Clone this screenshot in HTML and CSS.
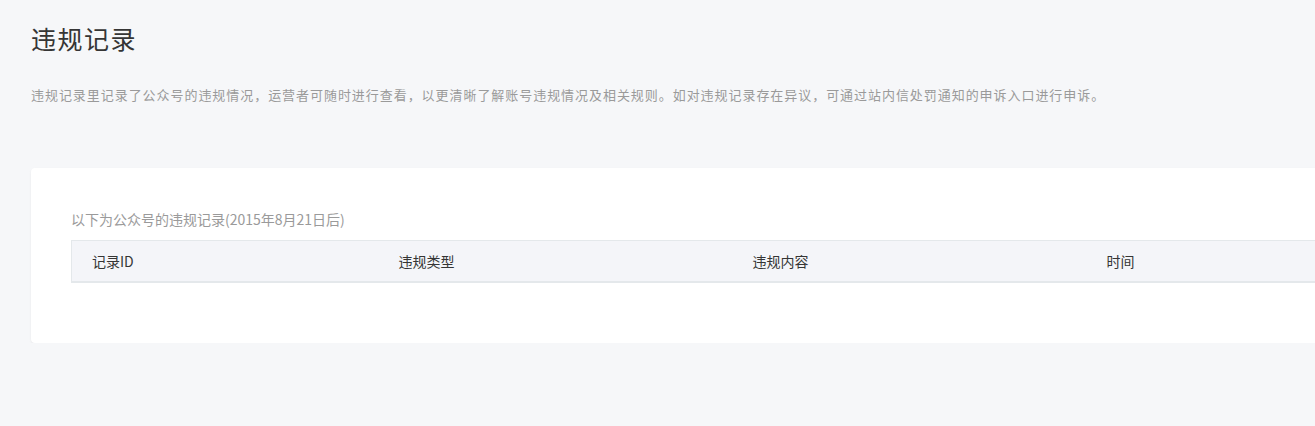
FILE: index.html
```html
<!DOCTYPE html>
<html>
<head>
    <meta charset="utf-8">
    <title>违规记录</title>
    <link rel="stylesheet" href="styles.css">
</head>
<body>
    <div class="page">
        <h2 class="page-title">违规记录</h2>
        <p class="page-desc">违规记录里记录了公众号的违规情况，运营者可随时进行查看，以更清晰了解账号违规情况及相关规则。如对违规记录存在异议，可通过站内信处罚通知的申诉入口进行申诉。</p>

        <div class="card">
            <p class="card-tip">以下为公众号的违规记录(2015年8月21日后)</p>
            <table class="record-table">
                <thead>
                    <tr>
                        <th class="col-id">记录ID</th>
                        <th class="col-type">违规类型</th>
                        <th class="col-content">违规内容</th>
                        <th class="col-time">时间</th>
                    </tr>
                </thead>
                <tbody></tbody>
            </table>
        </div>
    </div>
</body>
</html>
```

FILE: styles.css
```css
*{margin: 0; padding: 0; box-sizing: border-box;}
html,body{background: #f6f7f9;}
body{font-family: "Microsoft YaHei", "Noto Sans CJK SC", "Liberation Sans", sans-serif; color: #353535; overflow: hidden;}

.page{padding: 20px 0 0 31px; width: 1460px;}
.page-title{font-size: 25px; letter-spacing: 1.5px; font-weight: normal; line-height: 36px; color: #353535;}
.page-desc{margin-top: 29px; font-size: 13px; letter-spacing: 0.95px; line-height: 20px; color: #9a9a9a;}

.card{margin-top: 63px; background: #fff; border-radius: 4px;
    box-shadow: 0 1px 2px rgba(150,150,150,.15);
    padding: 40px 40px 60px 40px; height: 175px;}
.card-tip{font-size: 14px; line-height: 22px; color: #9a9a9a; margin-bottom: 10px;}

.record-table{width: 100%; border-collapse: collapse; font-size: 14px;}
.record-table th{background: #f4f5f9; font-weight: normal; text-align: left; color: #353535;
    height: 41px; padding: 0 0 0 21px;
    border-top: 1px solid #e4e8eb; border-bottom: 2px solid #e4e8eb;}
.record-table th.col-id{border-left: 1px solid #e4e8eb; width: 306px; padding-left: 20px;}
.record-table th.col-type{width: 354px;}
.record-table th.col-content{width: 354px;}
```
